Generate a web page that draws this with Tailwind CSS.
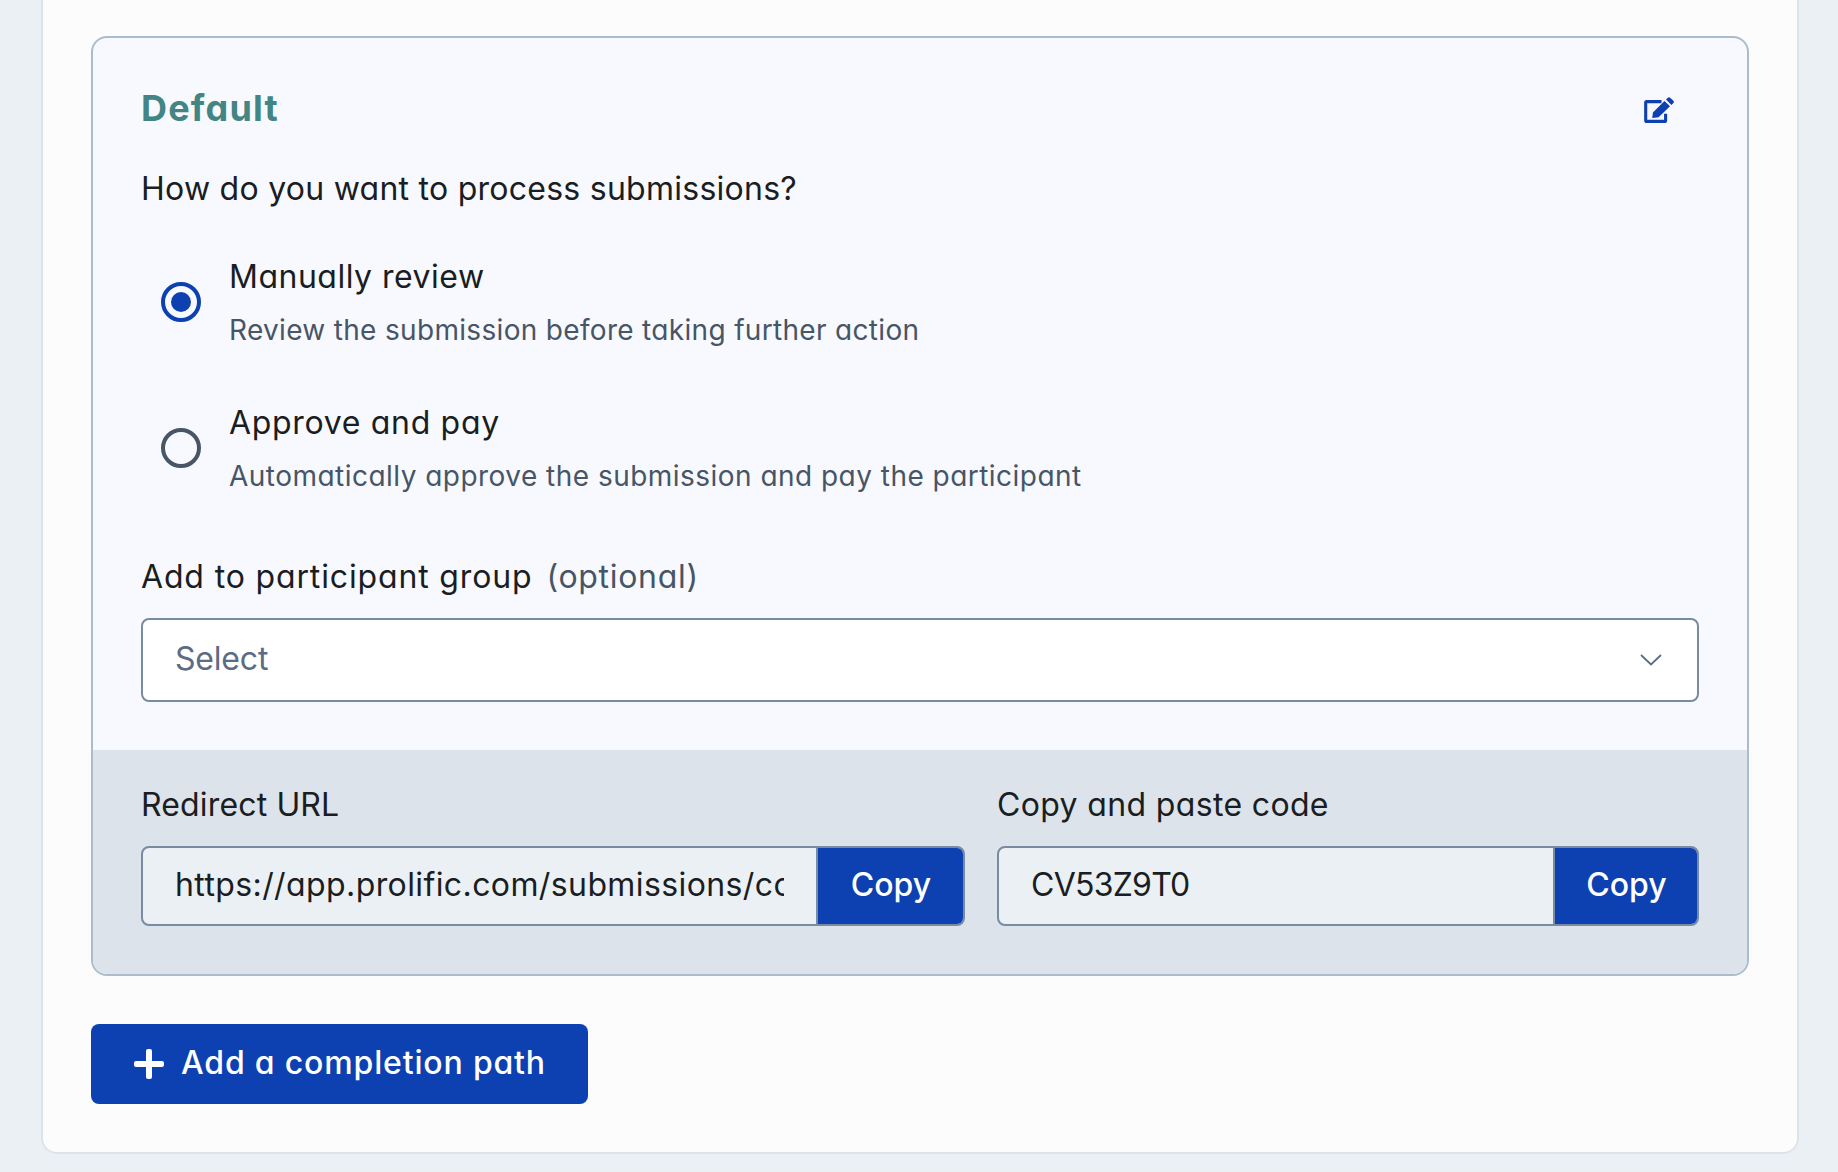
<!DOCTYPE html>
<html lang="en">
<head>
<meta charset="utf-8">
<title>Completion paths</title>
<script src="https://cdn.jsdelivr.net/npm/@tailwindcss/browser@4"></script>
</head>
<body class="h-[1172px] overflow-hidden bg-[#ebf0f4] pl-[41px] font-['Inter',sans-serif] text-[32px] leading-[48px] text-[#1a1d22] [font-feature-settings:'cv11']">
<main class="h-[1154px] w-[1758px] rounded-b-2xl border-2 border-t-0 border-[#dce4eb] bg-[#fcfcfc] px-12 pt-9">
  <section class="overflow-hidden rounded-2xl border-2 border-[#abbccd] bg-[#f8f9fe]">
    <div class="px-12 pt-[42px] pb-12">
      <header class="flex items-start justify-between">
        <h2 class="text-[36px] leading-[56px] font-bold tracking-[1.2px] text-[#438585]">Default</h2>
        <button class="mt-[17px] mr-[25px]" aria-label="Edit">
          <svg class="block h-[27px] w-[30px]" viewBox="0 0 30 27" fill="none">
            <path d="M17.5 4.6H2.7a1 1 0 0 0-1 1V23.4a1 1 0 0 0 1 1H20.6a1 1 0 0 0 1-1V16.8" stroke="#0d41b1" stroke-width="3.1"/>
            <path d="M20.5 3.9 26 9.2 14.6 20.2 8.8 21.1Q8.2 21 8.3 20.4L8.9 15.6Z" fill="#0d41b1"/>
            <path d="M22 2.6 23.6 1a2 2 0 0 1 2.8 0L29.2 3.6a1.8 1.8 0 0 1 0 2.6L27.4 7.9Z" fill="#0d41b1"/>
          </svg>
        </button>
      </header>
      <p class="mt-[29px] tracking-[0.26px]">How do you want to process submissions?</p>
      <div class="mt-[39px] flex flex-col gap-[46px] pl-5">
        <label class="flex items-center">
          <span class="flex size-10 items-center justify-center rounded-full border-4 border-[#0d41b1]"><span class="size-5 rounded-full bg-[#0d41b1]"></span></span>
          <span class="ml-7 flex h-[100px] flex-col gap-[9px] pt-px whitespace-nowrap">
            <span class="tracking-[0.5px]">Manually review</span>
            <span class="text-[28px] leading-10 tracking-[0.32px] text-[#475566]">Review the submission before taking further action</span>
          </span>
        </label>
        <label class="flex items-center">
          <span class="size-10 rounded-full border-4 border-[#475566]"></span>
          <span class="ml-7 flex h-[100px] flex-col gap-[9px] pt-px whitespace-nowrap">
            <span class="tracking-[0.68px]">Approve and pay</span>
            <span class="text-[28px] leading-10 tracking-[0.47px] text-[#475566]">Automatically approve the submission and pay the participant</span>
          </span>
        </label>
      </div>
      <div class="mt-[55px] flex gap-[14px]"><span class="tracking-[0.85px]">Add to participant group</span><span class="tracking-[0.7px] text-[#475566]">(optional)</span></div>
      <div class="mt-[17px] flex h-[84px] items-center justify-between rounded-lg border-2 border-[#778ba3] bg-white pr-[35px] pl-8 text-[#5b6c84]">
        <span class="pb-[3px] tracking-[-0.2px]">Select</span>
        <svg class="h-3 w-[22px]" viewBox="0 0 22 12" fill="none" stroke="#5b6c84" stroke-width="1.8"><path d="M1 1 11 10.5 21 1"/></svg>
      </div>
    </div>
    <div class="flex gap-8 bg-[#dce3ea] px-12 pt-[31px] pb-12">
      <div class="w-[824px]">
        <div class="tracking-[0.15px]">Redirect URL</div>
        <div class="mt-[17px] flex h-20 overflow-hidden rounded-lg border-2 border-[#778ba3] bg-[#ebf0f4]">
          <div class="flex flex-1 items-center overflow-hidden border-r-2 border-[#778ba3] px-8 pb-[2px]"><span class="block w-full overflow-hidden tracking-[0.4px] whitespace-nowrap">https://app.prolific.com/submissions/cc</span></div>
          <button class="w-[145px] bg-[#0d41b1] pb-[2px] pl-px font-medium text-white">Copy</button>
        </div>
      </div>
      <div class="w-[702px]">
        <div class="tracking-[0.35px]">Copy and paste code</div>
        <div class="mt-[17px] flex h-20 overflow-hidden rounded-lg border-2 border-[#778ba3] bg-[#ebf0f4]">
          <div class="flex flex-1 items-center border-r-2 border-[#778ba3] pb-[2px] pl-8 tracking-[-0.75px]">CV53Z9T0</div>
          <button class="w-[142px] bg-[#0d41b1] pb-[2px] pl-px font-medium text-white">Copy</button>
        </div>
      </div>
    </div>
  </section>
  <button class="mt-12 flex h-20 w-[497px] items-center rounded-lg bg-[#0d41b1] pl-[43px] font-medium text-white">
    <svg class="size-[30px]" viewBox="0 0 30 30" fill="#fff"><rect x="12" width="6" height="30" rx="2"/><rect y="12" width="30" height="6" rx="2"/></svg>
    <span class="ml-[17px] pb-[3px] tracking-[0.83px] whitespace-nowrap">Add a completion path</span>
  </button>
</main>
</body>
</html>
